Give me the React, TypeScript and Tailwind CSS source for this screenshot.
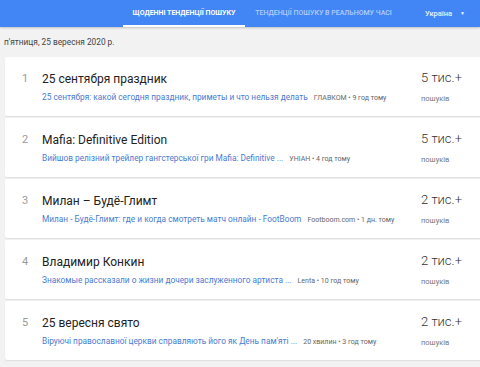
import React from 'react';

const ROWS = [
  { n: 1, title: '25 сентября праздник', link: '25 сентября: какой сегодня праздник, приметы и что нельзя делать', src: 'ГЛАВКОМ • 9 год тому', count: '5 тис.+' },
  { n: 2, title: 'Mafia: Definitive Edition', link: 'Вийшов релізний трейлер гангстерської гри Mafia: Definitive ...', src: 'УНІАН • 4 год тому', count: '5 тис.+' },
  { n: 3, title: 'Милан – Будё-Глимт', link: 'Милан - Будё-Глимт: где и когда смотреть матч онлайн - FootBoom', src: 'Footboom.com • 1 дн. тому', count: '2 тис.+' },
  { n: 4, title: 'Владимир Конкин', link: 'Знакомые рассказали о жизни дочери заслуженного артиста ...', src: 'Lenta • 10 год тому', count: '2 тис.+' },
  { n: 5, title: '25 вересня свято', link: 'Віруючі православної церкви справляють його як День пам\'яті ...', src: '20 хвилин • 3 год тому', count: '2 тис.+' },
];

export default function App() {
  return (
    <div className="w-[480px] h-[367px] overflow-hidden bg-[#f2f2f2]" style={{ fontFamily: 'Roboto, "Noto Sans", sans-serif' }}>
      <div className="h-[27px] bg-[#4285f4] flex items-stretch shadow-[0_1px_2px_rgba(0,0,0,0.2)]">
        <div className="w-[123px]" />
        <div className="w-[122px] flex items-center justify-center relative text-[7px] font-bold text-white">
          ЩОДЕННІ ТЕНДЕНЦІЇ ПОШУКУ
          <div className="absolute left-0 right-0 bottom-0 h-[2px] bg-white" />
        </div>
        <div className="w-[157px] flex items-center justify-center text-[7px] font-medium text-white/60">
          ТЕНДЕНЦІЇ ПОШУКУ В РЕАЛЬНОМУ ЧАСІ
        </div>
        <div className="flex items-center pl-[23px] text-[7.5px] font-medium text-white/90">
          Україна
          <span className="ml-[8px] text-[5px]">▼</span>
        </div>
      </div>
      <div className="pl-[4px] pt-[9px] h-[30px] text-[8.3px] text-[#444]">п'ятниця, 25 вересня 2020 р.</div>
      <div className="pl-[5px] flex flex-col gap-[2px]">
        {ROWS.map(r => (
          <div key={r.n} className="w-[490px] h-[59px] bg-white rounded-[2px] shadow-[0_1px_1px_rgba(0,0,0,0.08)] flex">
            <div className="w-[37px] pl-[17px] pt-[14px] text-[11px] text-[#9a9a9a]">{r.n}</div>
            <div className="w-[379px] pt-[13px]">
              <div className="text-[12px] leading-[18px] text-[#222]">{r.title}</div>
              <div className="mt-[3px] flex items-baseline whitespace-nowrap">
                <span className="text-[8.3px] text-[#4a7bd0]">{r.link}</span>
                <span className="ml-[6px] text-[7px] text-[#666]">{r.src}</span>
              </div>
            </div>
            <div className="pt-[12px]">
              <div className="text-[13px] leading-[18px] font-light text-[#333]">{r.count}</div>
              <div className="mt-[6px] text-[7.5px] text-[#777]">пошуків</div>
            </div>
          </div>
        ))}
      </div>
    </div>
  );
}
